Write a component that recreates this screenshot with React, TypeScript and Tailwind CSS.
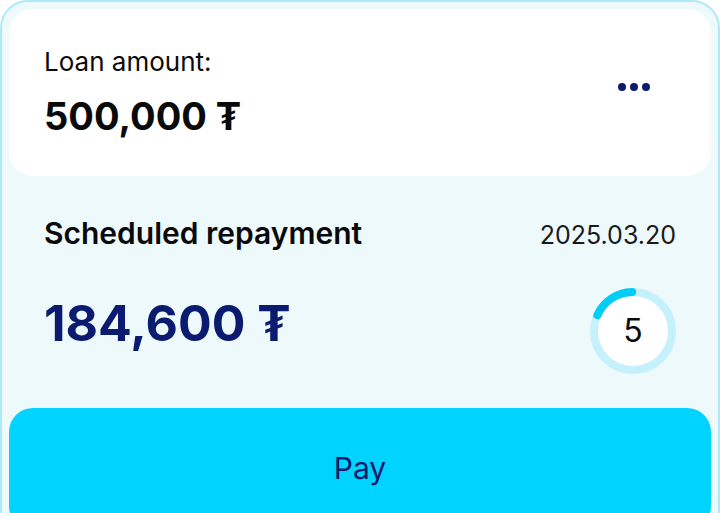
import React from 'react';

const ProgressRing: React.FC<{ value: number }> = ({ value }) => {
  const r = 39;
  const c = 2 * Math.PI * r;
  const arc = 44;
  return (
    <div className="relative h-[88px] w-[88px] shrink-0">
      <svg width="88" height="88" viewBox="0 0 88 88" className="absolute inset-0">
        <circle cx="44" cy="44" r={r} fill="#ffffff" stroke="#c5f1fc" strokeWidth="8" />
        <circle
          cx="44"
          cy="44"
          r={r}
          fill="none"
          stroke="#00cdf6"
          strokeWidth="8"
          strokeLinecap="round"
          strokeDasharray={`${arc} ${c}`}
          transform="rotate(-156 44 44)"
        />
      </svg>
      <span className="absolute inset-0 flex items-center justify-center text-[32px] leading-none text-[#0a0a0a]">
        {value}
      </span>
    </div>
  );
};

export default function App() {
  return (
    <div className="h-[513px] w-[720px] overflow-hidden bg-white font-['Inter','DejaVu_Sans',sans-serif]">
      <div className="min-h-[560px] rounded-t-[28px] border-2 border-[#aee9f8] bg-[#eef9fc] p-[7px]">
        {/* Loan amount card */}
        <div className="flex h-[167px] justify-between rounded-[24px] bg-white pl-[35px] pr-[61px] pt-[37px]">
          <div>
            <p className="text-[26px] leading-[32px] text-[#0a0a0a]">Loan amount:</p>
            <p className="mt-[15px] text-[38px] font-bold leading-[46px] text-[#0a0a0a]">500,000 ₮</p>
          </div>
          <button className="mt-[37px] flex h-[8px] items-center gap-[4px]" aria-label="More">
            <span className="h-[8px] w-[8px] rounded-full bg-[#0b1b6f]" />
            <span className="h-[8px] w-[8px] rounded-full bg-[#0b1b6f]" />
            <span className="h-[8px] w-[8px] rounded-full bg-[#0b1b6f]" />
          </button>
        </div>

        {/* Scheduled repayment */}
        <div className="px-[35px] pt-[39px]">
          <div className="flex items-baseline justify-between">
            <h3 className="text-[30px] font-semibold leading-[36px] text-[#0a0a0a]">Scheduled repayment</h3>
            <span className="text-[25px] text-[#1a1a1a]">2025.03.20</span>
          </div>
          <div className="mt-[32px] flex items-start justify-between">
            <p className="mt-[11px] text-[50px] font-bold leading-[50px] text-[#0b1b6f]">184,600 ₮</p>
            <div className="-mr-[1px]">
              <ProgressRing value={5} />
            </div>
          </div>
        </div>

        <button className="mt-[33px] flex h-[122px] w-full items-center justify-center rounded-[24px] bg-[#00d3fe] text-[30px] text-[#0b1b6f]">
          Pay
        </button>
      </div>
    </div>
  );
}
